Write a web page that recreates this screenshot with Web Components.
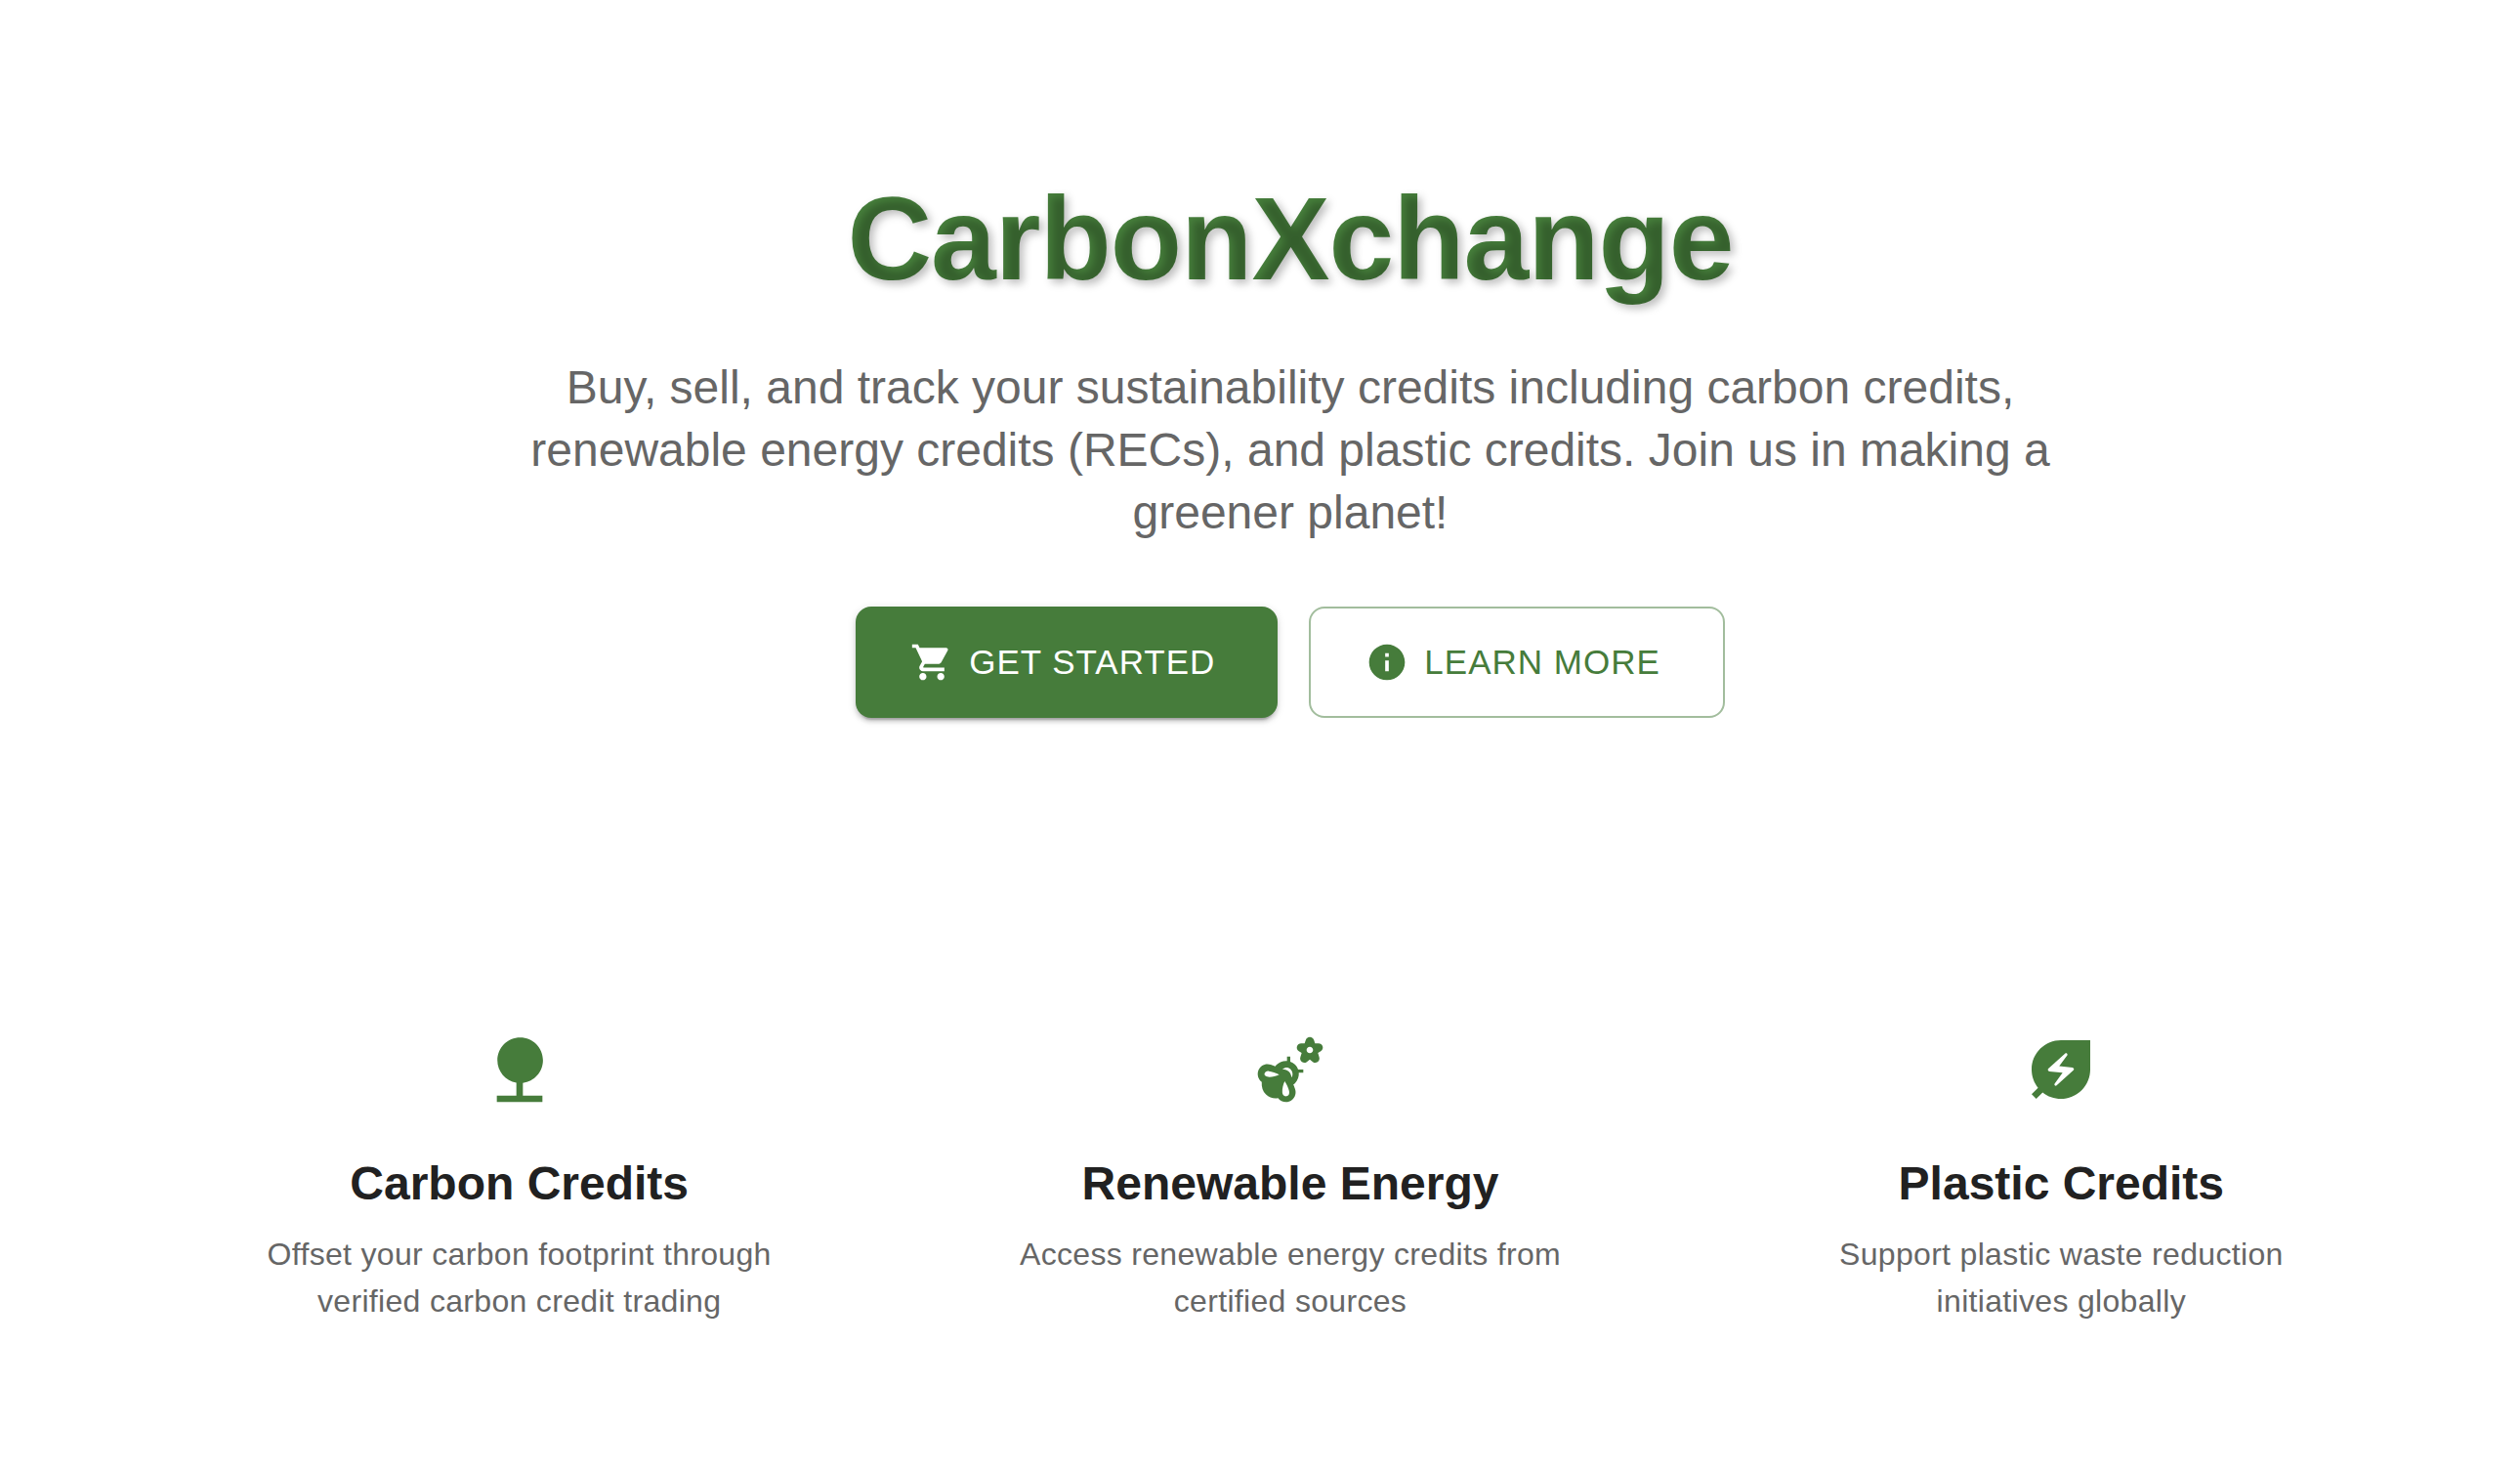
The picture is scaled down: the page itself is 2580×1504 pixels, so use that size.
<!DOCTYPE html>
<html lang="en">
<head>
<meta charset="utf-8">
<title>CarbonXchange</title>
<style>
  :root {
    --green: #467c3b;
    --ink: #212121;
    --muted: #666666;
    --page: #ffffff;
  }
  body {
    margin: 0;
    background: var(--page);
    color: var(--ink);
    font-family: Helvetica, "Liberation Sans", Arial, sans-serif;
  }
</style>
</head>
<body>
<landing-page></landing-page>

<template id="landing-page">
  <style>
    :host { display: block; padding: 172px 75px 64px 137px; }
    main { display: flex; flex-direction: column; gap: 320px; }
    .features { display: grid; grid-template-columns: repeat(3, 1fr); }
  </style>
  <main>
    <hero-banner>
      <span slot="title">CarbonXchange</span>
      <span slot="lead">Buy, sell, and track your sustainability credits including carbon credits, renewable energy credits (RECs), and plastic credits. Join us in making a greener planet!</span>
      <action-button variant="contained">
        <svg slot="icon" viewBox="0 0 24 24" fill="currentColor" aria-hidden="true"><path d="M7 18c-1.100 0-1.990.9-1.990 2S5.900 22 7 22s2-.9 2-2-.9-2-2-2zM1 2v2h2l3.600 7.590-1.350 2.450c-.16.28-.25.61-.25.96 0 1.100.9 2 2 2h12v-2H7.420c-.14 0-.25-.11-.25-.25l.03-.12.9-1.630h7.450c.75 0 1.410-.41 1.750-1.030l3.580-6.490c.08-.14.12-.31.12-.48 0-.55-.45-1-1-1H5.210l-.94-2H1zm16 16c-1.100 0-1.990.9-1.990 2s.89 2 1.990 2 2-.9 2-2-.9-2-2-2z"/></svg>
        GET STARTED
      </action-button>
      <action-button variant="outlined">
        <svg slot="icon" viewBox="0 0 24 24" fill="currentColor" aria-hidden="true"><path d="M12 2C6.480 2 2 6.480 2 12s4.480 10 10 10 10-4.480 10-10S17.520 2 12 2zm1 15h-2v-6h2v6zm0-8h-2V7h2v2z"/></svg>
        LEARN MORE
      </action-button>
    </hero-banner>
    <section class="features">
      <feature-card>
        <svg slot="icon" viewBox="0 0 24 24" fill="currentColor" aria-hidden="true"><path d="M13 16.120c3.470-.41 6.170-3.360 6.170-6.950 0-3.870-3.130-7-7-7s-7 3.130-7 7c0 3.470 2.520 6.340 5.830 6.890V20H5v2h14v-2h-6v-3.880z"/></svg>
        <span slot="title">Carbon Credits</span>
        Offset your carbon footprint through verified carbon credit trading
      </feature-card>
      <feature-card>
        <svg slot="icon" viewBox="0 0 24 24" fill="currentColor" aria-hidden="true">
          <path d="M21.940 4.880c-.18-.53-.69-.88-1.260-.88H19.600l-.31-.97C19.150 2.430 18.610 2 18 2s-1.150.43-1.290 1.040L16.400 4h-1.070c-.57 0-1.080.35-1.260.88-.19.56.04 1.170.56 1.480l.87.52-.37 1.240c-.23.57-.03 1.240.47 1.580.45.31 1.050.29 1.480-.05L18 8.900l.91.75c.44.34 1.040.36 1.480.05.5-.35.7-1.010.47-1.580l-.36-1.240.87-.52c.52-.31.76-.93.57-1.480zM18 7c-.55 0-1-.45-1-1s.45-1 1-1 1 .45 1 1-.45 1-1 1z"/>
          <path fill-rule="evenodd" d="M11 8h1v1.580c.55.2 1.060.5 1.490.93.430.43.730.94.930 1.490H16v1h-1.380c.1 1.130-.28 2.300-1.140 3.170-.16.16-.34.3-.53.43l.53 1.400c.55 1.560-.27 3.280-1.830 3.830-1.270.45-2.660-.01-3.420-1.040-1.300.2-2.700-.1-3.700-1.120-.98-.98-1.400-2.300-1.300-3.880-1.030-.760-1.500-2.150-1.060-3.440.55-1.550 2.270-2.370 3.830-1.820l1.400.53c.13-.19.27-.37.43-.53.86-.86 2-1.250 3.170-1.150V8zM9.600 11.900c.9.1 1.500.3 2 .8.500.5.700 1.100.8 1.800.5-.8.400-1.900-.3-2.600-.700-.7-1.700-.7-2.500 0zM4.100 13.200c.2-.5.700-.8 1.300-.7.900.1 2.200.6 3.200 1.050-.9.450-2.100.75-3 .75-1 0-1.700-.5-1.500-1.100zM10.300 15.600c.5.900 1.150 2 1.350 3 .2.900-.2 1.500-.75 1.600-.7.200-1.300-.3-1.350-1.200-.05-1 .25-2.500.75-3.400z"/>
        </svg>
        <span slot="title">Renewable Energy</span>
        Access renewable energy credits from certified sources
      </feature-card>
      <feature-card>
        <svg slot="icon" viewBox="0 0 24 24" fill="currentColor" aria-hidden="true"><path d="M12 3c-4.800 0-9 3.860-9 9 0 2.120.74 4.070 1.970 5.610L3 19.590 4.410 21l1.970-1.970C7.930 20.260 9.880 21 12 21c2.300 0 4.610-.88 6.360-2.640C20.120 16.610 21 14.300 21 12V3h-9zm3.830 9.260-5.160 4.630c-.16.15-.41.14-.56-.01-.14-.16-.16-.39-.04-.55l2.440-3.330-4.050-.4c-.44-.04-.63-.59-.3-.89l5.160-4.630c.16-.15.41-.14.56.01.14.16.16.39.04.55l-2.440 3.330 4.050.4c.45.04.63.59.3.89z"/></svg>
        <span slot="title">Plastic Credits</span>
        Support plastic waste reduction initiatives globally
      </feature-card>
    </section>
  </main>
</template>

<template id="hero-banner">
  <style>
    :host { display: flex; flex-direction: column; align-items: center; text-align: center; }
    h1 {
      margin: 0 0 49px;
      font-size: 120px;
      line-height: 144px;
      font-weight: 700;
      letter-spacing: -1px;
      color: transparent;
      background: #47803c;
      -webkit-background-clip: text;
      background-clip: text;
      text-shadow: 4px 4px 8px rgba(0, 0, 0, 0.26);
    }
    p {
      margin: 0 0 64px;
      max-width: 1600px;
      font-size: 48px;
      line-height: 64px;
      color: var(--muted);
    }
    .actions { display: flex; gap: 32px; }
  </style>
  <h1><slot name="title"></slot></h1>
  <p><slot name="lead"></slot></p>
  <div class="actions"><slot></slot></div>
</template>

<template id="action-button">
  <style>
    :host { display: block; }
    button {
      display: flex;
      align-items: center;
      gap: 16px;
      margin: 0;
      padding: 26px 64px 26px 56px;
      border: 0;
      border-radius: 16px;
      font: inherit;
      font-size: 35px;
      line-height: 62px;
      letter-spacing: 1px;
      cursor: pointer;
      color: #ffffff;
      background: var(--green);
      box-shadow: 0 6px 2px -4px rgba(0, 0, 0, 0.2), 0 4px 4px 0 rgba(0, 0, 0, 0.14), 0 2px 10px 0 rgba(0, 0, 0, 0.12);
    }
    :host([variant="outlined"]) button {
      padding-block: 24px;
      border: 2px solid rgb(70 124 59 / 50%);
      color: var(--green);
      background: transparent;
      box-shadow: none;
    }
    ::slotted(svg) { display: block; width: 44px; height: 44px; }
  </style>
  <button type="button"><slot name="icon"></slot><span><slot></slot></span></button>
</template>

<template id="feature-card">
  <style>
    :host { display: flex; flex-direction: column; align-items: center; padding: 0 104px; text-align: center; }
    ::slotted(svg) { display: block; width: 80px; height: 80px; color: var(--green); }
    h2 { margin: 45px 0 16px; font-size: 48px; line-height: 64px; font-weight: 700; }
    p { margin: 0; font-size: 32px; line-height: 48px; letter-spacing: 0.01em; color: var(--muted); }
  </style>
  <slot name="icon"></slot>
  <h2><slot name="title"></slot></h2>
  <p><slot></slot></p>
</template>

<script>
  class TemplateElement extends HTMLElement {
    constructor() {
      super();
      const template = document.getElementById(this.localName);
      this.attachShadow({ mode: "open" }).append(template.content.cloneNode(true));
    }
  }
  for (const name of ["action-button", "feature-card", "hero-banner", "landing-page"]) {
    customElements.define(name, class extends TemplateElement {});
  }
</script>
</body>
</html>
